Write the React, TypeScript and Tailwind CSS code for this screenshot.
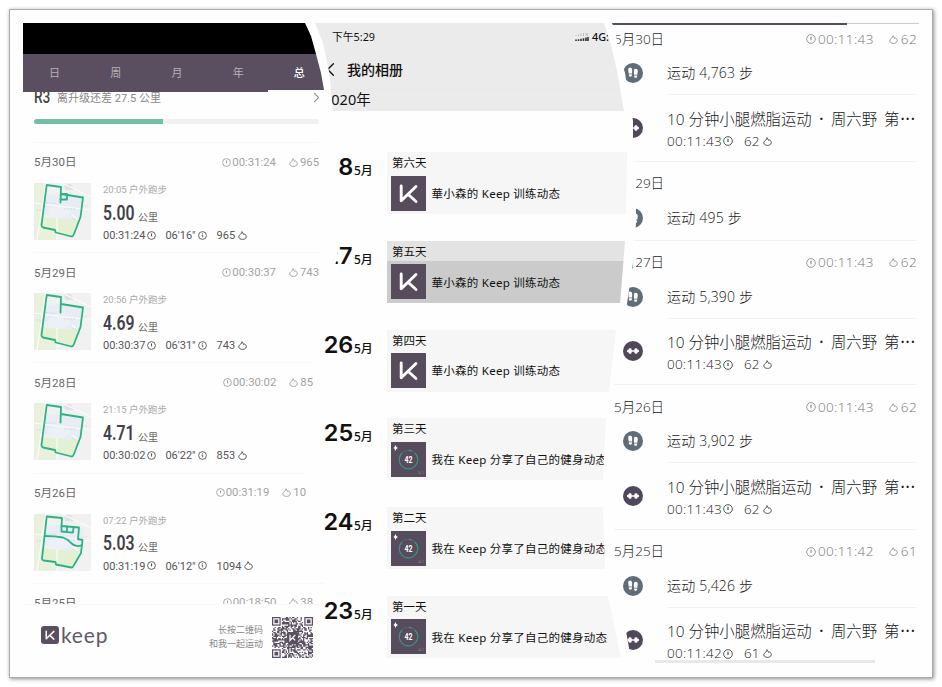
import React from 'react';
import { ChevronLeft, ChevronRight } from 'lucide-react';
import clsx from 'clsx';

type Run = {
    date: string;
    total: string;
    kcalTotal: string;
    time: string;
    km: string;
    pace: string;
    kcal: string;
    route: string[];
    cut: string;
};

const LOOP = 'M26.5 19.500L27 4L12.700 2L7.500 42Q7.500 44 9 44.500L21 47L21.700 49.500L37.500 53.500Q39 53.500 40 51L46.500 34L49 14.500L27 11';

const runs: Run[] = [
    { date: '5月30日', total: '00:31:24', kcalTotal: '965', time: '20:05', km: '5.00', pace: "06'16\"", kcal: '965', route: [LOOP, 'M27 11H33V16.500H26.500'], cut: 'w-[285px]' },
    { date: '5月29日', total: '00:30:37', kcalTotal: '743', time: '20:56', km: '4.69', pace: "06'31\"", kcal: '743', route: [LOOP], cut: 'w-[285px]' },
    { date: '5月28日', total: '00:30:02', kcalTotal: '85', time: '21:15', km: '4.71', pace: "06'22\"", kcal: '853', route: [LOOP], cut: 'w-[279px]' },
    {
        date: '5月26日', total: '00:31:19', kcalTotal: '10', time: '07:22', km: '5.03', pace: "06'12\"", kcal: '1094',
        route: [
            'M27.500 12L28 4L12.700 2.500L8 44.500Q8 46 9.500 46.500L21.500 48L22 50.500L37.500 53.500Q39 53.500 40 51L47 39L48.500 26L44 25L45 13.500L27.500 12',
            'M11 22Q21 22 29 23.500Q34 25 37 29Q42 34 48 31',
            'M27.500 12V17.500L39 18.500L39.500 13M33 12.500V18',
        ],
        cut: 'w-[272px]',
    },
];

const posts = [
    { day: '28', label: '第六天', text: '華小森的 Keep 训练动态', shared: false },
    { day: '27', label: '第五天', text: '華小森的 Keep 训练动态', shared: false },
    { day: '26', label: '第四天', text: '華小森的 Keep 训练动态', shared: false },
    { day: '25', label: '第三天', text: '我在 Keep 分享了自己的健身动态', shared: true },
    { day: '24', label: '第二天', text: '我在 Keep 分享了自己的健身动态', shared: true },
    { day: '23', label: '第一天', text: '我在 Keep 分享了自己的健身动态', shared: true },
];

const days = [
    { date: '5月30日', steps: '4,763', time: '00:11:43', kcal: '62' },
    { date: '5月29日', steps: '495', time: '', kcal: '' },
    { date: '5月27日', steps: '5,390', time: '00:11:43', kcal: '62' },
    { date: '5月26日', steps: '3,902', time: '00:11:43', kcal: '62' },
    { date: '5月25日', steps: '5,426', time: '00:11:42', kcal: '61' },
];

function Clock({ className }: { className?: string }) {
    return (
        <svg viewBox="0 0 12 12" className={clsx('shrink-0', className)} fill="none" stroke="currentColor" strokeWidth="1.2">
            <circle cx="6" cy="6" r="5.2" />
            <path d="M6 3.200V7.200" strokeWidth="1.500" />
        </svg>
    );
}

function Pace({ className }: { className?: string }) {
    return (
        <svg viewBox="0 0 12 12" className={clsx('shrink-0', className)} fill="none" stroke="currentColor" strokeWidth="1.2">
            <circle cx="6" cy="6" r="5.2" />
            <path d="M4.700 5.500H6.300V8.500M6 3V4.200" />
        </svg>
    );
}

function Flame({ className }: { className?: string }) {
    return (
        <svg viewBox="0 0 12 12" className={clsx('shrink-0', className)} fill="none" stroke="currentColor" strokeWidth="1.300" strokeLinejoin="round">
            <path d="M5.300 .8C6.200 2.200 7.200 3.200 7.400 4.700L9 3.900C10.300 5.200 11.300 6.400 11 8C10.600 10.200 8.500 11.200 6 11.200C3.400 11.200 1.200 10 1 7.800C.9 6.200 2.400 5 3.800 4C4.800 3.200 5.300 2.200 5.300 .8Z" />
        </svg>
    );
}

function KMark({ className }: { className?: string }) {
    return (
        <svg viewBox="0 0 35 35" className={className} fill="none" stroke="#fff" strokeWidth="2.900" strokeLinecap="round" strokeLinejoin="round">
            <path d="M10.200 10V24.800L25 10.500M17.300 18.500L25 25.500" />
        </svg>
    );
}

function RouteMap({ route }: { route: string[] }) {
    return (
        <svg viewBox="0 0 57 57" className="h-[57px] w-[57px] shrink-0">
            <rect width="57" height="57" fill="#f0f1f0" />
            <path d="M0 0H10L7 42L22 48V57H0Z" fill="#e9f1dd" />
            <path d="M8 34L24 36L47 33L39 54L22 50L7 44Z" fill="#e4f0d3" />
            <path d="M12 13L27 10L49 15L47 33Q35 40 24 34L10 31Z" fill="#e8edf5" />
            <ellipse cx="25" cy="29" rx="11" ry="6" fill="#edf0f7" />
            <path d="M30 1H37L40 7H31Z" fill="#e0e0e8" />
            <path d="M0 20L57 27M3 57L12 0M28 0L57 14M23 35V57M38 32L44 37" stroke="#fbfbf8" strokeWidth="1.200" fill="none" />
            <path d="M12 20H22M2 27H9M30 26H42M48 23H54M38 35L44 38" stroke="#cfd2dc" strokeWidth=".7" strokeDasharray="2 1" />
            {route.map((d) => (
                <path key={d} d={d} fill="none" stroke="#2bb482" strokeWidth="1.800" strokeLinejoin="round" strokeLinecap="round" />
            ))}
        </svg>
    );
}

// finder squares in three corners, noise modules everywhere else
const QR_SIZE = 33;
function qrPath() {
    let seed = 7;
    let d = '';
    for (let y = 0; y < QR_SIZE; y++) {
        for (let x = 0; x < QR_SIZE; x++) {
            seed = (seed * 16807) % 2147483647;
            const corner = (x < 8 && y < 8) || (x > QR_SIZE - 9 && y < 8) || (x < 8 && y > QR_SIZE - 9);
            const center = x > 11 && x < 21 && y > 11 && y < 21;
            if (!corner && !center && seed % 100 < 53) d += `M${x} ${y}h1v1h-1z`;
        }
    }
    return d;
}

function QrCode() {
    return (
        <svg viewBox="0 0 33 33" className="h-[41px] w-[41px]">
            <path d={qrPath()} fill="#5a5062" />
            {[[0, 0], [26, 0], [0, 26]].map(([x, y]) => (
                <g key={`${x}-${y}`} transform={`translate(${x} ${y})`}>
                    <rect x=".5" y=".5" width="6" height="6" fill="#fff" stroke="#5a5062" />
                    <rect x="2" y="2" width="3" height="3" fill="#5a5062" />
                </g>
            ))}
            <rect x="12" y="12" width="9" height="9" rx="1" fill="#584f60" />
            <path d="M14.500 14.200V18.800L18.800 14.400M16.500 16.800L18.700 18.800" fill="none" stroke="#fff" strokeWidth="1" />
        </svg>
    );
}

function RunHeader({ run }: { run: Run }) {
    return (
        <div className={clsx('flex h-10 items-center justify-between overflow-hidden whitespace-nowrap', run.cut)}>
            <span className="text-[11.5px] text-[#666]">{run.date}</span>
            <span className="flex items-center text-[11.3px] text-[#a2a2a2]">
                <Clock className="mr-px -mt-0.5 h-[9px] w-[9px]" />
                {run.total}
                <Flame className="mr-0.5 -mt-0.5 ml-[13px] h-[9px] w-[9px]" />
                {run.kcalTotal}
            </span>
        </div>
    );
}

function RunPanel() {
    return (
        <section className="flex h-[642px] w-[302px] shrink-0 flex-col font-[Roboto,'Noto_Sans_CJK_SC',sans-serif]">
            <div className="shrink-0 [clip-path:polygon(0_0,282px_0,288px_13px,293px_31px,298px_50px,301px_67px,245px_67px,245px_69px,0_69px)]">
                <div className="h-[31px] bg-black" />
                <div className="flex h-[38px] bg-[#5a4f60] pt-[11px] pl-px text-[11px] leading-[18px] text-[#b5afb9]">
                    {['日', '周', '月', '年', '总'].map((tab) => (
                        <span key={tab} className={clsx('w-[61.2px] shrink-0 text-center', tab === '总' && 'font-medium text-white')}>{tab}</span>
                    ))}
                </div>
            </div>
            <div className="flex h-[27px] shrink-0 items-start overflow-hidden pl-[11px]">
                <span className="-mt-[5px] w-[23px] origin-left scale-x-[.72] text-[19px] leading-[20px] font-medium text-[#444]">R3</span>
                <span className="-mt-[2px] text-[11px] leading-[18px] whitespace-nowrap text-[#888]">离升级还差 27.5 公里</span>
                <ChevronRight className="-mt-[3px] mr-0 ml-auto h-[17px] w-[17px] text-[#999]" strokeWidth={1.5} />
            </div>
            <div className="ml-[11px] h-[5px] w-[285px] shrink-0 rounded-full bg-[#f0f0f0]">
                <div className="h-full w-[129px] rounded-l-full bg-[#72bfa5]" />
            </div>
            <div className="mt-[18px] h-[462px] shrink-0 overflow-hidden pl-[11px]">
                {runs.map((run) => (
                    <div key={run.date} className={clsx('h-[110.2px] border-t border-[#f8f8f8]', run.cut)}>
                        <RunHeader run={run} />
                        <div className="flex gap-3">
                            <RouteMap route={run.route} />
                            <div className="whitespace-nowrap">
                                <p className="text-[9.5px] leading-[14px] text-[#aaa]">{run.time} 户外跑步</p>
                                <p className="flex h-8 items-center text-[10px] text-[#666]">
                                    <span className="mr-[-8px] inline-block origin-left scale-x-[.77] text-[20.5px] font-semibold text-[#443f4a]">{run.km}</span>
                                    <span className="mt-2 ml-[2px]">公里</span>
                                </p>
                                <p className="flex items-center text-[11px] leading-[14px] text-[#555]">
                                    {run.total}<Clock className="-mt-0.5 ml-0.5 h-[9px] w-[9px]" />
                                    <span className="ml-[9px]">{run.pace}</span><Pace className="-mt-0.5 ml-0.5 h-[9px] w-[9px]" />
                                    <span className="ml-2.5">{run.kcal}</span><Flame className="-mt-0.5 ml-[3px] h-[9px] w-[9px]" />
                                </p>
                            </div>
                        </div>
                    </div>
                ))}
                <div className="border-t border-[#f8f8f8]">
                    <RunHeader run={{ ...runs[0], date: '5月25日', total: '00:18:50', kcalTotal: '38', cut: 'w-[279px]' }} />
                </div>
            </div>
            <div className="flex flex-1 items-center border-t border-[#f8f8f8] pt-[4px] pr-[12px] pl-[18px]">
                <span className="-mt-1 flex h-[18px] w-[18px] items-center justify-center rounded-[3px] bg-[#5a4f60]"><KMark className="h-5 w-5" /></span>
                <span className="-mt-[4px] ml-0.5 font-[Lato,sans-serif] text-[21px] leading-6 tracking-[.8px] text-[#625968]">keep</span>
                <p className="mr-[9px] ml-auto text-right text-[9px] leading-[14.5px] whitespace-nowrap text-[#888]">长按二维码<br />和我一起运动</p>
                <QrCode />
            </div>
        </section>
    );
}

function ScoreBadge() {
    return (
        <svg viewBox="0 0 35 35" className="h-[35px] w-[35px] shrink-0 bg-[#564c5b]">
            <circle cx="17.500" cy="17.700" r="9.300" fill="none" stroke="#625e69" strokeWidth="1" />
            <path d="M11 11A9.300 9.300 0 1 0 24 11M17.500 8.400A9.300 9.300 0 0 1 21 9" fill="none" stroke="#37958b" strokeWidth="1.100" />
            <path d="M4.500 3L5.400 5L7 6L5.400 7L4.500 9L3.600 7L2.500 6L3.600 5Z" fill="#fff" />
            <text x="17.500" y="20.700" textAnchor="middle" fontFamily="Roboto" fontWeight="700" fontSize="8.500" textLength="8" lengthAdjust="spacingAndGlyphs" fill="#fff">42</text>
            <path d="M28 29V32L30 29.500M29 31L30.500 32M32 29V32" stroke="#827987" strokeWidth=".6" fill="none" />
        </svg>
    );
}

function AlbumPanel() {
    return (
        <section className="-ml-[10px] flex h-[642px] w-[312px] shrink-0 flex-col font-['Noto_Sans','Noto_Sans_CJK_SC',sans-serif] text-[#111] [clip-path:polygon(0_0,289px_0,296px_22px,302px_48px,309px_88px,312px_129px,311px_191px,310px_218px,305px_280px,301px_307px,294px_368px,291px_395px,288px_457px,288px_484px,290px_546px,293px_573px,306px_635px,306px_642px,0_642px,0_320px,14px_270px,20px_244px,23px_228px,23px_160px,22px_130px,18px_88px,14px_48px,8px_20px)]">
            <header className="h-[88px] shrink-0 bg-[#ebebeb]">
                <div className="flex h-7 items-center pl-[17px] text-[10.8px]">
                    <span>下午5:29</span>
                    <svg viewBox="0 0 14 10" className="ml-auto h-2.5 w-3.5">
                        <path d="M1 9V7.500M3.500 9V7.200M6 9V6.800M8.500 9V6.200M11 9V5.500M13 9V5" stroke="#333" strokeWidth="1.600" />
                        <path d="M1 4V3M3.500 4V2.500M6 4V1.500M8.500 4V1M10.500 1L13 4M13 1L10.500 4" stroke="#bbb" strokeWidth="1" />
                    </svg>
                    <span className="mr-[18px] ml-[3px] font-medium">4G:</span>
                </div>
                <div className="flex h-[39px] items-center border-b border-[#e8e8e8] pb-px pl-1">
                    <ChevronLeft className="h-[23px] w-[23px]" strokeWidth={1.4} />
                    <h1 className="ml-[5px] text-[14px] font-medium">我的相册</h1>
                    <span className="mr-[2px] ml-auto h-2.5 w-[6px] border-b-[1.5px] border-l-[1.5px] border-[#222]" />
                </div>
                <div className="flex h-[21px] items-center pb-px pl-[8px] text-[14.5px]">2020年</div>
            </header>
            <ul className="mt-[41px] flex flex-col gap-[26.8px]">
                {posts.map((post) => (
                    <li key={post.day} className="flex h-[62px] shrink-0">
                        <div className="flex w-[72px] shrink-0 items-baseline pl-[8px] whitespace-nowrap">
                            <span className="w-[31px] text-center font-[Inter,sans-serif] text-[23.5px] leading-[29px] font-semibold">{post.day}</span>
                            <span className="text-[12px] font-medium">5月</span>
                        </div>
                        <div className={clsx('min-w-0 flex-1 overflow-hidden whitespace-nowrap', post.day === '27' ? 'bg-[#e3e3e3]' : 'bg-[#f6f6f6]')}>
                            <p className="h-5 pt-px pl-[5px] text-[11.5px] leading-5">{post.label}</p>
                            <div className={clsx('flex h-[42px] items-center gap-1.5 pl-[3.5px]', post.day === '27' && 'bg-[#cbcbcb]')}>
                                {post.shared ? <ScoreBadge /> : <KMark className="h-[35px] w-[35px] shrink-0 bg-[#564c5b]" />}
                                <span className="pt-px text-[11.5px] tracking-[.26px]">{post.text}</span>
                            </div>
                        </div>
                    </li>
                ))}
            </ul>
        </section>
    );
}

function StepsIcon() {
    return (
        <svg viewBox="0 0 20 20" className="h-5 w-5 shrink-0">
            <circle cx="10" cy="10" r="10" fill="#606c78" />
            <g fill="#fff">
                <path d="M5.200 6.500Q5.200 4.500 7.200 4.500Q9.200 4.500 9.200 7L9 10.500H5.700Z" />
                <path d="M5.900 11.300H8.900V12.300Q8.700 13.700 7.400 13.700Q6 13.700 5.900 12.300Z" />
                <path d="M10.800 8Q10.800 5.800 12.700 5.800Q14.800 5.800 14.800 8L14.300 11.800H11Z" />
                <path d="M11.100 12.600H14.100V13.600Q14 15 12.600 15Q11.300 15 11.100 13.600Z" />
            </g>
        </svg>
    );
}

function DumbbellIcon() {
    return (
        <svg viewBox="0 0 20 20" className="h-5 w-5 shrink-0">
            <circle cx="10" cy="10" r="10" fill="#51475a" />
            <path d="M7 10H13" stroke="#fff" strokeWidth="1.600" />
            <rect x="5.500" y="7.200" width="3.100" height="5.600" rx="1.400" fill="#fff" />
            <rect x="11.400" y="7.200" width="3.100" height="5.600" rx="1.400" fill="#fff" />
            <circle cx="5.200" cy="10" r="1.300" fill="#fff" />
            <circle cx="14.800" cy="10" r="1.300" fill="#fff" />
        </svg>
    );
}

function StepsPanel() {
    return (
        <section className="-ml-[17px] flex h-[642px] w-[310px] shrink-0 flex-col font-['Open_Sans','Noto_Sans_CJK_SC',sans-serif] font-light text-[#1a1a1a] [clip-path:polygon(2px_0,310px_0,310px_642px,22px_642px,16px_608px,8px_570px,0_540px,0_380px,10px_325px,18px_274px,23px_240px,26px_200px,26px_155px,23px_118px,23px_98px,15px_50px,7px_22px,6px_10px)]">
            <div className="h-0.5 w-[309px] shrink-0 border-t border-[#ccc]">
                <div className="-mt-px h-0.5 w-[237px] bg-[#564c5b]" />
            </div>
            <div className="-mt-2 pl-1">
                {days.map((day) => (
                    <div key={day.date} className="w-[303px] border-b border-[#f2f2f2] last:border-0">
                        <div className="flex h-[34px] items-center justify-between pt-[10px]">
                            <span className="text-[13.5px]">{day.date}</span>
                            {day.time && (
                                <span className="flex items-center text-[13.5px] text-[#777]">
                                    <Clock className="mr-0.5 h-2.5 w-2.5 text-[#999]" />
                                    <span className="tracking-[.4px]">{day.time}</span>
                                    <Flame className="mr-[3px] ml-[15px] h-[9px] w-[9px] text-[#999]" />
                                    <span className="tracking-[.4px]">{day.kcal}</span>
                                </span>
                            )}
                        </div>
                        <div className="flex h-[44px] items-center pl-[8.5px]">
                            <StepsIcon />
                            <div className={clsx('ml-[24.5px] flex h-full flex-1 items-center text-[14px] tracking-[.2px]', day.time && 'border-b border-[#f2f2f2]')}>
                                运动 {day.steps} 步
                            </div>
                        </div>
                        {day.time && (
                            <div className="flex h-[65.5px] items-center pl-[8.5px] whitespace-nowrap">
                                <DumbbellIcon />
                                <div className="ml-[24.5px] pt-[5px]">
                                    <p className="text-[15.4px] leading-[22px]">
                                        10 分钟小腿燃脂运动<span className="mx-[3.5px] font-semibold"> · </span>周六野<span className="ml-[3px]"> 第</span>
                                        <span className="ml-px font-semibold tracking-[.9px]">···</span>
                                    </p>
                                    <p className="flex items-center text-[13.5px] leading-[21px]">
                                        <span className="tracking-[.3px]">{day.time}</span><Clock className="ml-px h-2.5 w-2.5 text-[#555]" />
                                        <span className="ml-[11px]">{day.kcal}</span><Flame className="ml-[3px] h-[9px] w-[9px] text-[#555]" />
                                    </p>
                                </div>
                            </div>
                        )}
                    </div>
                ))}
            </div>
            <div className="-mt-[13px] ml-[45px] h-[3px] w-[220px] shrink-0 bg-[#e8e8e8]" />
        </section>
    );
}

export default function App() {
    return (
        <div className="h-[687px] w-[942px] overflow-hidden bg-white p-[9px]">
            <main className="flex h-[669px] w-[924px] overflow-hidden border border-[#aaa] bg-[#fefefe] pt-[13px] pl-[13px] shadow-[1px_1px_4px_rgba(0,0,0,.45)]">
                <RunPanel />
                <AlbumPanel />
                <StepsPanel />
            </main>
        </div>
    );
}
